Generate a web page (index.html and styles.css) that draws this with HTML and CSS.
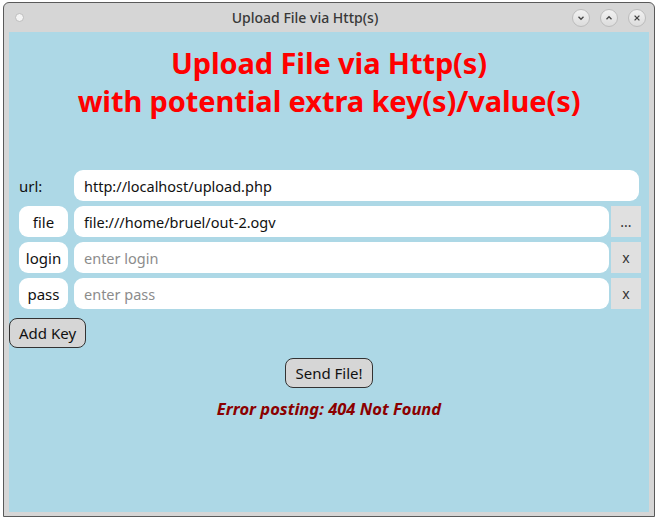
FILE: index.html
```html
<!DOCTYPE html>
<html>
<head>
<meta charset="utf-8">
<title>Upload File via Http(s)</title>
<link rel="stylesheet" href="styles.css">
</head>
<body>
<div class="window">
  <div class="titlebar">
    <span class="tb-dot"></span>
    <span class="tb-title">Upload File via Http(s)</span>
    <div class="tb-buttons">
      <span class="tb-btn"><svg width="8" height="8" viewBox="0 0 8 8"><path d="M1.5 2.8 L4 5.3 L6.5 2.8" fill="none" stroke="#444" stroke-width="1.3"/></svg></span>
      <span class="tb-btn"><svg width="8" height="8" viewBox="0 0 8 8"><path d="M1.5 5.2 L4 2.7 L6.5 5.2" fill="none" stroke="#444" stroke-width="1.3"/></svg></span>
      <span class="tb-btn"><svg width="8" height="8" viewBox="0 0 8 8"><path d="M1.6 1.6 L6.4 6.4 M6.4 1.6 L1.6 6.4" fill="none" stroke="#444" stroke-width="1.3"/></svg></span>
    </div>
  </div>
  <div class="content">
    <h1 class="heading">Upload File via Http(s)<br>with potential extra key(s)/value(s)</h1>
    <div class="rows">
      <div class="row">
        <span class="label plain">url:</span>
        <span class="field url">http://localhost/upload.php</span>
      </div>
      <div class="row">
        <span class="label">file</span>
        <span class="field">file:///home/bruel/out-2.ogv</span>
        <span class="side-btn">...</span>
      </div>
      <div class="row">
        <span class="label">login</span>
        <span class="field placeholder">enter login</span>
        <span class="side-btn">x</span>
      </div>
      <div class="row">
        <span class="label">pass</span>
        <span class="field placeholder">enter pass</span>
        <span class="side-btn">x</span>
      </div>
    </div>
    <div class="addrow"><button class="btn">Add Key</button></div>
    <div class="sendrow"><button class="btn">Send File!</button></div>
    <div class="error">Error posting: 404 Not Found</div>
  </div>
</div>
</body>
</html>
```

FILE: styles.css
```css
html, body {
  margin: 0;
  padding: 0;
  background: #ffffff;
}
body {
  font-family: "Noto Sans", "DejaVu Sans", sans-serif;
  width: 657px;
  height: 518px;
  overflow: hidden;
}
.window {
  margin: 2px 0 0 3px;
  width: 650px;
  height: 513px;
  border: 1px solid #5a5a5a;
  border-radius: 6px 6px 0 0;
  background: #d6d6d6;
  display: flex;
  flex-direction: column;
}
.titlebar {
  height: 29px;
  display: flex;
  align-items: center;
  padding: 0 8px 0 11px;
}
.tb-dot {
  width: 7px;
  height: 7px;
  border-radius: 50%;
  background: #f4f4f4;
  border: 1px solid #bdbdbd;
}
.tb-title {
  flex: 1;
  text-align: center;
  font-size: 14px;
  font-weight: 500;
  color: #383838;
  padding-left: 14px;
}
.tb-buttons {
  display: flex;
  gap: 10px;
}
.tb-btn {
  width: 16px;
  height: 16px;
  border-radius: 50%;
  border: 1px solid #bcbcbc;
  background: linear-gradient(#f2f2f2, #dcdcdc);
  display: flex;
  align-items: center;
  justify-content: center;
}
.content {
  margin: 0 5px;
  height: 480px;
  background: #add8e6;
  display: flex;
  flex-direction: column;
}
.heading {
  margin: 12px 0 0;
  text-align: center;
  color: #ff0000;
  font-size: 29px;
  letter-spacing: -0.1px;
  line-height: 38px;
  font-weight: 700;
}
.rows {
  margin-top: 50px;
  padding: 0 8px 0 10px;
  display: flex;
  flex-direction: column;
  gap: 5px;
}
.row {
  display: flex;
  height: 31px;
  align-items: stretch;
}
.label {
  width: 49px;
  margin-right: 6px;
  background: #ffffff;
  border-radius: 9px;
  display: flex;
  align-items: center;
  justify-content: center;
  font-size: 15px;
  color: #111;
}
.label.plain {
  background: transparent;
  justify-content: flex-start;
}
.field {
  flex: 1;
  background: #ffffff;
  border-radius: 9px;
  display: flex;
  align-items: center;
  padding-left: 10px;
  font-size: 14.5px;
  color: #111;
}
.field.url {
  margin-right: 2px;
}
.field.placeholder {
  color: #8c8c8c;
}
.side-btn {
  width: 30px;
  margin-left: 2px;
  background: #e0e0e0;
  display: flex;
  align-items: center;
  justify-content: center;
  font-size: 14px;
  color: #333;
}
.addrow {
  margin-top: 9px;
  display: flex;
}
.btn {
  font-family: "Noto Sans", "DejaVu Sans", sans-serif;
  font-size: 15px;
  color: #111;
  background: #d6d6d6;
  border: 1px solid #333;
  border-radius: 8px;
  height: 30px;
  padding: 0 9px;
  margin: 0;
}
.sendrow {
  margin-top: 10px;
  display: flex;
  justify-content: center;
}
.error {
  margin-top: 9px;
  text-align: center;
  color: #8b0000;
  font-weight: 700;
  font-style: italic;
  font-size: 16.5px;
}
```
